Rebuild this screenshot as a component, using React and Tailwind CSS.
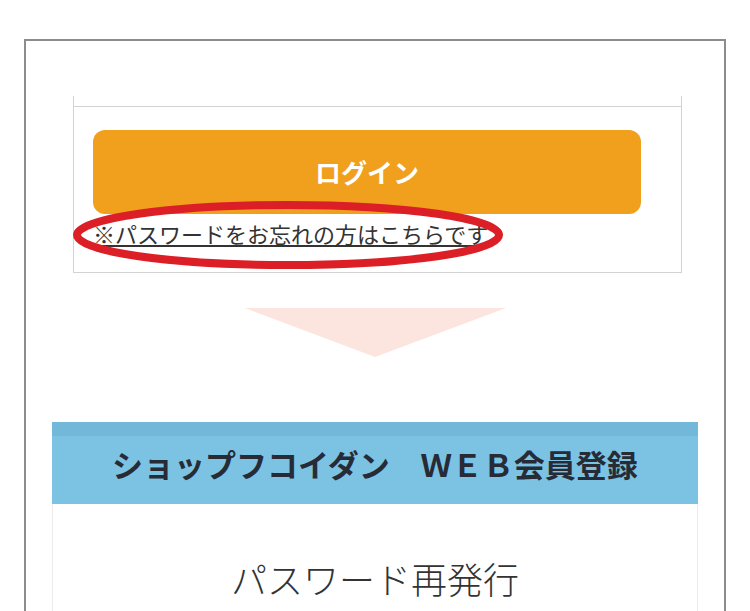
export default function App() {
  const jp = { fontFamily: '"Noto Sans CJK JP", "Noto Sans", sans-serif' };
  return (
    <div className="h-[611px] overflow-hidden bg-white pl-[24px] pt-[39px]" style={jp}>
      <div className="flex h-[600px] w-[702px] flex-col border-2 border-b-0 border-[#8c8c8c]">
        {/* login box */}
        <div className="relative ml-[47px] mt-[55px] w-[609px] border-x border-b border-[#d3d3d3] pl-[19px] pr-[40px] pb-[24px]">
          <div className="-ml-[19px] -mr-[40px] h-[11px] border-b border-[#d3d3d3]" />
          <div className="mt-[23px] flex h-[84px] w-[548px] items-center justify-center rounded-[12px] bg-[#f0a01c]">
            <span className="text-[26px] font-bold leading-none text-white">ログイン</span>
          </div>
          <div className="mt-[8px] whitespace-nowrap">
            <span className="text-[22px] leading-none text-[#333] underline decoration-[#333] underline-offset-[2px]">
              ※パスワードをお忘れの方はこちらです
            </span>
          </div>
          <svg
            className="pointer-events-none absolute left-[-2px] top-[105px]"
            width="436"
            height="72"
            viewBox="0 0 436 72"
          >
            <ellipse cx="216" cy="34" rx="211" ry="30" fill="none" stroke="#dc1f26" strokeWidth="8" />
          </svg>
        </div>

        {/* arrow */}
        <div className="mt-[35px] flex justify-center">
          <svg width="261" height="49" viewBox="0 0 261 49">
            <polygon points="0,0 261,0 130,49" fill="#fbe5de" />
          </svg>
        </div>

        {/* registration panel */}
        <div className="mx-[26px] mt-[65px] flex flex-1 flex-col">
          <div className="relative flex h-[82px] items-center justify-center bg-[#7cc2e3]">
            <div className="absolute inset-x-0 top-0 h-[14px] bg-[#73b7d9]" />
            <span className="relative text-[31px] font-bold leading-none text-[#262b36]">
              ショップフコイダン　ＷＥＢ会員登録
            </span>
          </div>
          <div className="flex flex-1 flex-col items-center border-x border-[#ececec] pt-[56px]">
            <span className="text-[36px] font-light leading-none text-[#333]">パスワード再発行</span>
          </div>
        </div>
      </div>
    </div>
  );
}
